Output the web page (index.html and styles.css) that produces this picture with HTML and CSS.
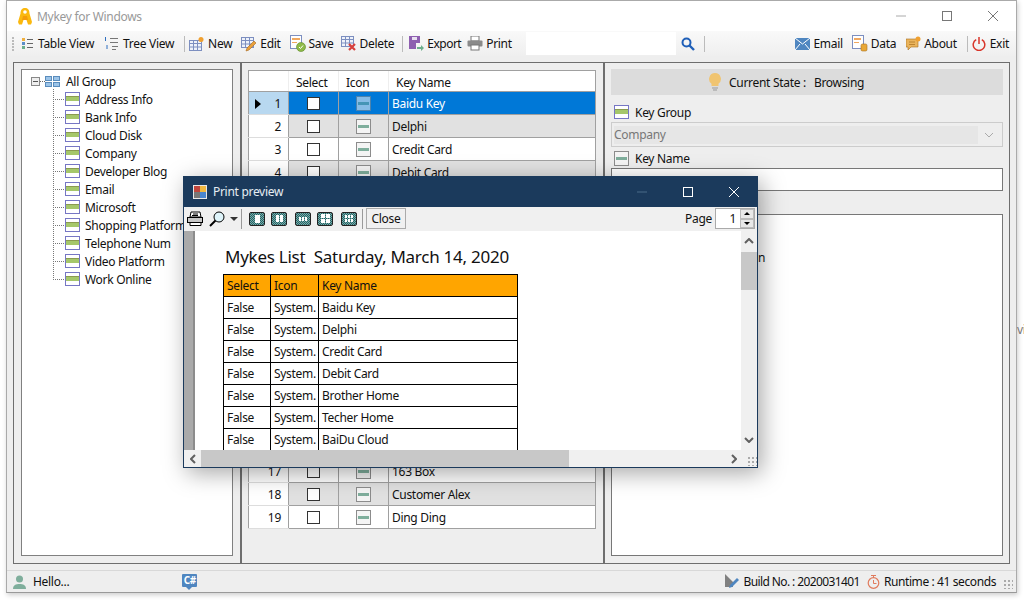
FILE: index.html
```html
<!DOCTYPE html>
<html>
<head>
  <meta charset="utf-8">
  <title>Mykey for Windows</title>
  <link rel="stylesheet" href="styles.css">
</head>
<body>
  <svg class="defs" width="0" height="0">
    <symbol id="i-group" viewBox="0 0 15 14">
      <rect x=".5" y=".5" width="14" height="13" fill="#fff" stroke="#7676c4"/>
      <rect x="1" y="4" width="13" height="5" fill="#a5c76a"/>
      <rect x="1" y="4" width="13" height="1" fill="#8a9a50"/>
    </symbol>
    <symbol id="i-key" viewBox="0 0 15 15">
      <rect x=".5" y=".5" width="14" height="14" fill="#f4f4f4" stroke="#8c8c8c"/>
      <rect x="2" y="6" width="11" height="3" fill="#7fae9c"/>
    </symbol>
    <symbol id="i-table" viewBox="0 0 16 14">
      <rect x=".5" y="3.5" width="12" height="10" fill="#eef2fa" stroke="#7d8fc0"/>
      <path d="M.5 6.5h12M.5 10h12M4.5 3.5v10M8.5 3.5v10" stroke="#7d8fc0" fill="none"/>
    </symbol>
  </svg>

  <div class="window">
    <div class="titlebar">
      <svg class="app-icon" width="16" height="17" viewBox="0 0 16 17">
        <path d="M8 0C4.500 0 3.500 2.500 3.500 5.500L1 14l1 2.500h3L6.500 12h3L11 16.500h3l1-2.500-2.500-8.500C12.500 2.500 11.500 0 8 0z" fill="#fbb80e"/>
        <circle cx="8" cy="4" r="1.800" fill="#fff"/>
        <path d="M6 8h4l1 4H5z" fill="#f39c0a"/>
      </svg>
      <span class="app-title">Mykey for Windows</span>
      <div class="caption-btns">
        <svg width="12" height="12" viewBox="0 0 12 12"><path d="M1 6h10" stroke="#aaa"/></svg>
        <svg width="12" height="12" viewBox="0 0 12 12"><rect x="1.5" y="1.5" width="9" height="9" fill="none" stroke="#777"/></svg>
        <svg width="12" height="12" viewBox="0 0 12 12"><path d="M1 1l10 10M11 1L1 11" stroke="#777"/></svg>
      </div>
    </div>

    <div class="toolbar">
      <span class="grip"></span>
      <span class="tool tool-wide tool-table">
        <svg width="12" height="12" viewBox="0 0 12 12">
          <rect y="0" width="3" height="3" fill="#f0b040"/><rect y="4" width="3" height="3" fill="#5b8fc9"/><rect y="8" width="3" height="3" fill="#6cae8c"/>
          <path d="M5 1.5h6M5 5.5h6M5 9.500h6" stroke="#666"/>
        </svg>Table View</span>
      <span class="tool tool-wide tool-tree">
        <svg width="15" height="15" viewBox="0 0 15 15">
          <path d="M6 2.500h8M6 6.500h8M8 10.500h6M8 13.500h4" stroke="#777"/>
          <path d="M1.500 1v4M3 9v4" stroke="#2f6fc0"/>
        </svg>Tree View</span>
      <span class="sep"></span>
      <span class="tool">
        <svg width="16" height="15" viewBox="0 0 16 15">
          <use href="#i-table" width="16" height="14" y="1"/>
          <circle cx="12" cy="3.500" r="2.500" fill="#f0a030"/>
        </svg>New</span>
      <span class="tool">
        <svg width="16" height="16" viewBox="0 0 16 16">
          <use href="#i-table" width="16" height="14" y="-2"/>
          <path d="M5 15l1-3 7-7 2 2-7 7z" fill="#e8a03c" stroke="#a86a20" stroke-width=".6"/>
        </svg>Edit</span>
      <span class="tool tool-save">
        <svg width="16" height="17" viewBox="0 0 16 17">
          <rect x=".5" y=".5" width="11" height="13" fill="#fff" stroke="#7d8fc0"/>
          <rect x="2" y="3" width="8" height="2" fill="#f0a860"/><path d="M2 7.500h5" stroke="#f0a860"/>
          <circle cx="11" cy="12" r="4.500" fill="#8fba48" stroke="#5d8a2c" stroke-width=".6"/>
          <path d="M9 12l1.500 1.500 2.500-3" stroke="#fff" fill="none"/>
        </svg>Save</span>
      <span class="tool tool-delete">
        <svg width="16" height="16" viewBox="0 0 16 16">
          <use href="#i-table" width="16" height="14" y="-3"/>
          <path d="M8 8l6 6M14 8l-6 6" stroke="#d8403c" stroke-width="2.200"/>
        </svg>Delete</span>
      <span class="sep sep-export"></span>
      <span class="tool tool-export">
        <svg width="15" height="15" viewBox="0 0 15 15">
          <path d="M0 0h11v7H7v6H0z" fill="#8e5fb0"/><rect x="3" y="1" width="5" height="3" fill="#e8e0f0"/>
          <path d="M8 11h4V9l3 3-3 3v-2H8z" fill="#6cae8c"/>
        </svg>Export</span>
      <span class="tool">
        <svg width="16" height="15" viewBox="0 0 16 15">
          <rect x="4" y="0" width="8" height="5" fill="#fff" stroke="#777"/>
          <rect x=".5" y="4.500" width="15" height="6" rx="1" fill="#8a8a8a"/>
          <rect x="4" y="9" width="8" height="5" fill="#fff" stroke="#777"/>
        </svg>Print</span>
      <span class="search-box"></span>
      <svg class="search-icon" width="14" height="14" viewBox="0 0 14 14">
        <circle cx="5.500" cy="5.500" r="4" fill="none" stroke="#1f5fb8" stroke-width="2"/>
        <path d="M8.500 8.500l4.500 4.500" stroke="#1f5fb8" stroke-width="2.400"/>
      </svg>
      <span class="sep sep-search"></span>
      <span class="toolbar-spacer"></span>
      <span class="tool tool-wide tool-email">
        <svg width="15" height="12" viewBox="0 0 15 12">
          <rect width="15" height="12" fill="#4f86c0"/>
          <path d="M0 0l7.500 6L15 0M0 12l5-6M15 12l-5-6" stroke="#fff" fill="none"/>
        </svg>Email</span>
      <span class="tool tool-data">
        <svg width="16" height="17" viewBox="0 0 16 17">
          <rect x=".5" y=".5" width="11" height="13" fill="#fff" stroke="#7d8fc0"/>
          <rect x="2" y="3" width="7" height="2" fill="#f0a860"/><path d="M2 7.500h5" stroke="#f0a860"/>
          <rect x="9" y="9" width="6" height="7" rx="1.500" fill="#e8a838" stroke="#a87020" stroke-width=".6"/>
        </svg>Data</span>
      <span class="tool tool-about">
        <svg width="15" height="15" viewBox="0 0 15 15">
          <path d="M0 3h12v8H5l-3 3v-3H0z" fill="#eab45c" stroke="#a87020" stroke-width=".6"/>
          <circle cx="12" cy="3" r="2.500" fill="#f0a030"/>
          <path d="M3 6h6M3 8.500h6" stroke="#a87020" stroke-width=".7"/>
        </svg>About</span>
      <span class="sep"></span>
      <span class="tool tool-wide tool-exit">
        <svg width="14" height="14" viewBox="0 0 14 14">
          <path d="M4.200 2.600a5.800 5.800 0 1 0 5.600 0" fill="none" stroke="#d8352a" stroke-width="1.500"/>
          <path d="M7 0v7" stroke="#d8352a" stroke-width="1.500"/>
        </svg>Exit</span>
    </div>

    <div class="main">
      <div class="panel panel-tree">
        <div class="tree-box">
          <div class="tree-root">
            <span class="expander"></span>
            <span class="twig-short"></span>
            <svg width="15" height="11" viewBox="0 0 15 11">
              <rect x=".5" y=".5" width="6" height="4" fill="#9cc4e8" stroke="#5a8cbc"/><rect x="8.500" y=".5" width="6" height="4" fill="#9cc4e8" stroke="#5a8cbc"/>
              <rect x=".5" y="6.500" width="6" height="4" fill="#9cc4e8" stroke="#5a8cbc"/><rect x="8.500" y="6.500" width="6" height="4" fill="#9cc4e8" stroke="#5a8cbc"/>
            </svg>
            <span>All Group</span>
          </div>
          <ul class="tree-list">
            <li><svg width="15" height="14"><use href="#i-group"/></svg>Address Info</li>
            <li><svg width="15" height="14"><use href="#i-group"/></svg>Bank Info</li>
            <li><svg width="15" height="14"><use href="#i-group"/></svg>Cloud Disk</li>
            <li><svg width="15" height="14"><use href="#i-group"/></svg>Company</li>
            <li><svg width="15" height="14"><use href="#i-group"/></svg>Developer Blog</li>
            <li><svg width="15" height="14"><use href="#i-group"/></svg>Email</li>
            <li><svg width="15" height="14"><use href="#i-group"/></svg>Microsoft</li>
            <li><svg width="15" height="14"><use href="#i-group"/></svg>Shopping Platform</li>
            <li><svg width="15" height="14"><use href="#i-group"/></svg>Telephone Num</li>
            <li><svg width="15" height="14"><use href="#i-group"/></svg>Video Platform</li>
            <li><svg width="15" height="14"><use href="#i-group"/></svg>Work Online</li>
          </ul>
        </div>
      </div>

      <div class="panel panel-grid">
        <table class="grid">
          <thead>
            <tr><th class="col-row"></th><th class="col-select">Select</th><th class="col-icon">Icon</th><th class="col-name">Key Name</th></tr>
          </thead>
          <tbody>
            <tr class="selected"><td class="row-no"><span class="row-arrow"></span>1</td><td><span class="check"></span></td><td><svg width="15" height="15"><use href="#i-key"/></svg></td><td class="name">Baidu Key</td></tr>
            <tr class="alt"><td class="row-no">2</td><td><span class="check"></span></td><td><svg width="15" height="15"><use href="#i-key"/></svg></td><td class="name">Delphi</td></tr>
            <tr><td class="row-no">3</td><td><span class="check"></span></td><td><svg width="15" height="15"><use href="#i-key"/></svg></td><td class="name">Credit Card</td></tr>
            <tr class="alt"><td class="row-no">4</td><td><span class="check"></span></td><td><svg width="15" height="15"><use href="#i-key"/></svg></td><td class="name">Debit Card</td></tr>
            <tr class="covered"><td colspan="4"></td></tr>
            <tr><td class="row-no">17</td><td><span class="check"></span></td><td><svg width="15" height="15"><use href="#i-key"/></svg></td><td class="name">163 Box</td></tr>
            <tr class="alt"><td class="row-no">18</td><td><span class="check"></span></td><td><svg width="15" height="15"><use href="#i-key"/></svg></td><td class="name">Customer Alex</td></tr>
            <tr><td class="row-no">19</td><td><span class="check"></span></td><td><svg width="15" height="15"><use href="#i-key"/></svg></td><td class="name">Ding Ding</td></tr>
          </tbody>
        </table>
      </div>

      <div class="panel panel-detail">
        <div class="state-bar">
          <svg width="12" height="19" viewBox="0 0 12 19">
            <path d="M6 0a6 6 0 0 0-3.500 10.800V13h7v-2.200A6 6 0 0 0 6 0z" fill="#f0c470"/>
            <path d="M3 15h6M4 17h4" stroke="#999"/>
          </svg>
          <span>Current State :</span>
          <span>Browsing</span>
        </div>
        <div class="field-label field-group"><svg width="15" height="14"><use href="#i-group"/></svg>Key Group</div>
        <div class="combo">
          <span class="combo-value">Company</span>
          <svg width="10" height="6" viewBox="0 0 10 6"><path d="M1 1l4 4 4-4" fill="none" stroke="#aaa"/></svg>
        </div>
        <div class="field-label"><svg width="15" height="15"><use href="#i-key"/></svg>Key Name</div>
        <div class="text-input"></div>
        <div class="notes"><span>n</span></div>
      </div>
    </div>

    <div class="statusbar">
      <svg width="13" height="14" viewBox="0 0 13 14">
        <circle cx="6.500" cy="4" r="3.500" fill="#7fae9c"/><path d="M0 14c0-4 3-5 6.500-5s6.500 1 6.500 5z" fill="#7fae9c"/>
      </svg>
      <span class="status-hello">Hello...</span>
      <span class="badge-cs">C#</span>
      <span class="status-spacer"></span>
      <svg width="16" height="15" viewBox="0 0 16 15">
        <path d="M1 0l8 8v5H1z" fill="#808080"/>
        <path d="M5 14l1-3 7-7 2 2-7 7z" fill="#4f86c0"/>
      </svg>
      <span class="status-build">Build No. : 2020031401</span>
      <svg width="13" height="14" viewBox="0 0 13 14">
        <circle cx="6.500" cy="8" r="5.300" fill="none" stroke="#e07a5c" stroke-width="1.200"/>
        <path d="M4 .5h5M6.500 1v2M6.500 5v3.500H9.500" stroke="#e07a5c" fill="none"/>
      </svg>
      <span class="status-runtime">Runtime : 41 seconds</span>
      <span class="size-grip"></span>
    </div>
  </div>

  <span class="edge-text">vi</span>

  <!-- print preview dialog sits over the main window -->
  <div class="dialog">
    <div class="dlg-title">
      <svg width="14" height="14" viewBox="0 0 14 14">
        <rect width="14" height="14" fill="#e8e8e8"/>
        <rect x="1" y="1" width="6" height="6" fill="#c0453c"/><rect x="7" y="1" width="6" height="6" fill="#f0b840"/>
        <rect x="1" y="7" width="6" height="6" fill="#777"/><rect x="7" y="7" width="6" height="6" fill="#4a86d0"/>
      </svg>
      <span class="dlg-title-text">Print preview</span>
      <div class="dlg-caption">
        <svg width="12" height="12" viewBox="0 0 12 12"><path d="M1 6h10" stroke="#4a6a88"/></svg>
        <svg width="12" height="12" viewBox="0 0 12 12"><rect x="1.500" y="1.500" width="9" height="9" fill="none" stroke="#fff"/></svg>
        <svg width="12" height="12" viewBox="0 0 12 12"><path d="M1 1l10 10M11 1L1 11" stroke="#fff"/></svg>
      </div>
    </div>
    <div class="dlg-toolbar">
      <svg class="dlg-print" width="16" height="15" viewBox="0 0 16 15">
        <path d="M4 1h9l1 5H3z" fill="#fff" stroke="#000"/>
        <rect x=".5" y="6.500" width="15" height="5" fill="#c8c8c8" stroke="#000"/>
        <path d="M3 11.500h11v3H3z" fill="#fff" stroke="#000"/>
        <path d="M6 3h5M5 4.500h6" stroke="#000"/>
      </svg>
      <svg class="dlg-zoom" width="16" height="16" viewBox="0 0 16 16">
        <circle cx="10" cy="6" r="5" fill="#dff4fa" stroke="#000"/>
        <path d="M6.500 9.500L1 15" stroke="#000" stroke-width="2"/>
      </svg>
      <span class="caret"></span>
      <span class="dlg-sep"></span>
      <span class="page-btn page-one"><i></i></span>
      <span class="page-btn page-two"><i></i><i></i></span>
      <span class="page-btn page-three"><i></i><i></i><i></i></span>
      <span class="page-btn page-four"><i></i><i></i><i></i><i></i></span>
      <span class="page-btn page-six"><i></i><i></i><i></i><i></i><i></i><i></i></span>
      <span class="dlg-sep"></span>
      <span class="close-btn">Close</span>
      <span class="dlg-spacer"></span>
      <span class="page-label">Page</span>
      <span class="spinner">
        <span class="spinner-value">1</span>
        <span class="spinner-btns"><b class="spin-up"></b><b class="spin-down"></b></span>
      </span>
    </div>
    <div class="dlg-body">
      <div class="preview">
        <div class="preview-strip"></div>
        <div class="preview-page">
          <div class="preview-title">Mykes List&nbsp; Saturday, March 14, 2020</div>
          <table class="print-table">
            <tr class="print-head"><td class="p-select">Select</td><td class="p-icon">Icon</td><td>Key Name</td></tr>
            <tr><td>False</td><td>System.</td><td>Baidu Key</td></tr>
            <tr><td>False</td><td>System.</td><td>Delphi</td></tr>
            <tr><td>False</td><td>System.</td><td>Credit Card</td></tr>
            <tr><td>False</td><td>System.</td><td>Debit Card</td></tr>
            <tr><td>False</td><td>System.</td><td>Brother Home</td></tr>
            <tr><td>False</td><td>System.</td><td>Techer Home</td></tr>
            <tr><td>False</td><td>System.</td><td>BaiDu Cloud</td></tr>
          </table>
        </div>
        <div class="vscroll">
          <svg width="10" height="6" viewBox="0 0 10 6"><path d="M1 5l4-4 4 4" fill="none" stroke="#606060" stroke-width="2"/></svg>
          <span class="vthumb"></span>
          <span class="scroll-fill"></span>
          <svg width="10" height="6" viewBox="0 0 10 6"><path d="M1 1l4 4 4-4" fill="none" stroke="#606060" stroke-width="2"/></svg>
        </div>
      </div>
      <div class="hscroll">
        <svg width="6" height="10" viewBox="0 0 6 10"><path d="M5 1L1 5l4 4" fill="none" stroke="#606060" stroke-width="2"/></svg>
        <span class="hthumb"></span>
        <span class="scroll-fill"></span>
        <svg width="6" height="10" viewBox="0 0 6 10"><path d="M1 1l4 4-4 4" fill="none" stroke="#606060" stroke-width="2"/></svg>
        <span class="size-grip dlg-grip"></span>
      </div>
    </div>
  </div>
</body>
</html>
```

FILE: styles.css
```css
* {
  box-sizing: border-box;
}
html, body {
  margin: 0;
  height: 100%;
}
body {
  position: relative;
  width: 1024px;
  height: 600px;
  overflow: hidden;
  background: #fff;
  font-family: "Noto Sans", sans-serif;
  font-size: 12px;
  letter-spacing: -.3px;
  color: #111;
}
svg {
  display: block;
  flex: none;
}
.defs {
  position: absolute;
}

/* main window */
.window {
  display: flex;
  flex-direction: column;
  width: 1011px;
  height: 593px;
  margin-left: 6px;
  background: #eee;
  border: 1px solid #aaa;
  border-bottom-color: #999;
  box-shadow: 1px 2px 5px rgba(0, 0, 0, 0.2);
}
.titlebar {
  display: flex;
  align-items: center;
  height: 30px;
  padding-left: 10px;
  background: #fff;
}
.app-title {
  margin-left: 4px;
  color: #999;
}
.caption-btns {
  display: flex;
  gap: 34px;
  margin-left: auto;
  padding-right: 17px;
}
.toolbar {
  display: flex;
  align-items: center;
  height: 25px;
  padding-left: 5px;
  background: linear-gradient(#f9f9f9, #efefef);
}
.grip {
  width: 2px;
  height: 14px;
  margin-right: 8px;
  background: repeating-linear-gradient(#bbb 0 2px, transparent 2px 3px);
}
.tool {
  display: flex;
  align-items: center;
  gap: 3px;
  margin-right: 9px;
  white-space: nowrap;
}
.tool-wide {
  gap: 4px;
}
.tool-table {
  margin-right: 10px;
}
.tool-tree {
  margin-right: 10px;
}
.tool-save {
  margin-right: 7px;
}
.tool-delete {
  margin-right: 8px;
}
.tool-export {
  margin-right: 6px;
  letter-spacing: -.5px;
}
.tool-email {
  margin-right: 9px;
}
.tool-data {
  margin-right: 10px;
}
.tool-about {
  margin-right: 10px;
}
.sep {
  width: 1px;
  height: 16px;
  margin-right: 4px;
  background: #bbb;
}
.sep-export {
  margin-right: 6px;
}
.search-box {
  width: 150px;
  height: 23px;
  margin-left: 5px;
  background: #fff;
}
.search-icon {
  margin-left: 5px;
}
.sep-search {
  margin-left: 9px;
}
.toolbar-spacer {
  flex: 1;
}
.tool-exit {
  margin-right: 7px;
}

/* three panels */
.main {
  display: flex;
  flex: none;
  height: 502px;
  margin: 6px 6px 0;
  border: 1px solid #6e6e6e;
}
.panel-tree {
  width: 228px;
  padding: 6px 7px 7px;
  border-right: 2px solid #6e6e6e;
}
.tree-box {
  height: 100%;
  padding: 2px 0 0 9px;
  background: #fff;
  border: 1px solid #808080;
}
.tree-root {
  display: flex;
  align-items: center;
  height: 18px;
}
.expander {
  width: 9px;
  height: 9px;
  background: linear-gradient(#555, #555) center / 5px 1px no-repeat #eee;
  border: 1px solid #888;
}
.twig-short {
  width: 5px;
  border-top: 1px dotted #666;
}
.tree-root span:last-child {
  margin-left: 6px;
}
.tree-list {
  margin: -1px 0 0 22px;
  padding: 1px 0 0;
  list-style: none;
  background: repeating-linear-gradient(#777 0 1px, transparent 1px 2px) left top / 1px calc(100% - 9px) no-repeat;
}
.tree-list li {
  display: flex;
  align-items: center;
  gap: 5px;
  height: 18px;
  padding-left: 12px;
  white-space: nowrap;
  background: repeating-linear-gradient(90deg, #777 0 1px, transparent 1px 2px) left center / 12px 1px no-repeat;
}

.panel-grid {
  width: 363px;
  padding: 7px 6px 0 6px;
  border-right: 2px solid #6e6e6e;
}
.grid {
  width: 348px;
  table-layout: fixed;
  border-collapse: collapse;
  background: #fff;
}
.grid th {
  height: 21px;
  padding: 2px 0 0 7px;
  font-weight: normal;
  text-align: left;
  background: #fff;
  border-top: 1px solid #a0a0a0;
  border-bottom: 1px solid #a0a0a0;
  border-left: 1px solid #eee;
}
.grid th.col-row {
  width: 40px;
  border-left: 1px solid #a0a0a0;
}
.col-select,
.col-icon {
  width: 50px;
}
.grid th.col-name {
  border-right: 1px solid #a0a0a0;
}
.grid td {
  height: 23px;
  padding: 0;
  text-align: center;
  border: 1px solid #a0a0a0;
}
.grid td svg {
  margin: 0 auto;
}
.grid td.row-no {
  position: relative;
  padding-right: 7px;
  text-align: right;
  background: #fff;
  border-top-color: #ddd;
  border-bottom-color: #ddd;
  border-right-color: #a0a0a0;
}
.grid td.name {
  padding-left: 3px;
  text-align: left;
}
.grid .alt td:not(.row-no) {
  background: #e1e1e1;
}
.grid .selected td {
  color: #fff;
  background: #0078d7;
}
.grid .selected td.row-no {
  color: #111;
  background: #b8d8f0;
}
.grid .selected svg {
  opacity: .55;
}
.grid .covered td {
  height: 276px;
  background: #e1e1e1;
}
.row-arrow {
  position: absolute;
  top: 7px;
  left: 6px;
  border-top: 5px solid transparent;
  border-bottom: 5px solid transparent;
  border-left: 6px solid #000;
}
.check {
  display: block;
  width: 13px;
  height: 13px;
  margin: 0 auto;
  background: #fff;
  border: 1px solid #333;
}

.panel-detail {
  flex: 1;
  padding: 6px;
}
.state-bar {
  display: flex;
  align-items: center;
  gap: 8px;
  height: 26px;
  padding-left: 98px;
  background: #dcdcdc;
}
.field-label {
  display: flex;
  align-items: center;
  gap: 6px;
  height: 18px;
  padding-left: 3px;
}
.field-group {
  margin-top: 8px;
}
.combo {
  display: flex;
  align-items: center;
  height: 25px;
  margin: 1px 0 2px;
  padding: 2px 8px 2px 2px;
  background: #eee;
  border: 1px solid #ccc;
}
.combo-value {
  flex: 1;
  height: 18px;
  margin-right: 6px;
  line-height: 18px;
  color: #777;
  background: #e6e6e6;
}
.text-input {
  height: 23px;
  margin-top: 1px;
  background: #fff;
  border: 1px solid #777;
}
.notes {
  height: 342px;
  margin-top: 23px;
  padding: 34px 0 0 146px;
  background: #fff;
  border: 1px solid #777;
}

/* status bar */
.statusbar {
  display: flex;
  align-items: center;
  height: 22px;
  margin-top: 6px;
  padding-left: 6px;
  border-top: 1px solid #d8d8d8;
}
.status-hello {
  margin-left: 7px;
}
.badge-cs {
  position: relative;
  width: 15px;
  height: 13px;
  margin: -2px 0 0 113px;
  font-size: 10px;
  font-weight: bold;
  line-height: 13px;
  text-align: center;
  color: #fff;
  background: #4f86c0;
  border-radius: 1px;
}
.badge-cs::after {
  content: "";
  position: absolute;
  top: 13px;
  left: 4px;
  border-top: 3px solid #4f86c0;
  border-left: 3px solid transparent;
  border-right: 3px solid transparent;
}
.status-spacer {
  flex: 1;
}
.status-build {
  margin: 0 7px 0 3px;
  letter-spacing: -.6px;
}
.status-runtime {
  margin-left: 4px;
  letter-spacing: -.4px;
}
.size-grip {
  width: 10px;
  height: 10px;
  margin: 4px 3px 0 7px;
  background: radial-gradient(circle, #aaa 1px, transparent 1.200px) 0 0 / 4px 4px;
}
.edge-text {
  position: absolute;
  top: 321px;
  left: 1017px;
  color: #777;
}

/* print preview dialog */
.dialog {
  position: absolute;
  top: 176px;
  left: 183px;
  display: flex;
  flex-direction: column;
  width: 575px;
  height: 292px;
  background: #f0f0f0;
  border: 1px solid #1b3a5c;
  box-shadow: 4px 5px 22px rgba(0, 0, 0, 0.35);
}
.dlg-title {
  display: flex;
  align-items: center;
  height: 30px;
  padding: 0 0 1px 9px;
  color: #e6edf3;
  background: #1b3a5c;
}
.dlg-title-text {
  margin-left: 6px;
}
.dlg-caption {
  display: flex;
  gap: 34px;
  margin-left: auto;
  padding-right: 17px;
}
.dlg-toolbar {
  display: flex;
  align-items: center;
  height: 24px;
  padding: 0 0 1px 3px;
  background: #f0f0f0;
}
.dlg-zoom {
  margin-left: 6px;
}
.caret {
  margin-left: 5px;
  border-top: 4px solid #333;
  border-left: 4px solid transparent;
  border-right: 4px solid transparent;
}
.dlg-sep {
  width: 1px;
  height: 20px;
  margin: 0 3px;
  background: #999;
}
.page-btn {
  display: grid;
  gap: 1px;
  place-content: center;
  width: 16px;
  height: 14px;
  margin-left: 8px;
  background: repeating-conic-gradient(#1f6868 0 25%, #7fa6a6 0 50%) 0 0 / 2px 2px;
  border: 1px solid #222;
  border-radius: 2px;
}
.dlg-sep + .page-btn {
  margin-left: 4px;
}
.page-two,
.page-four {
  margin-left: 6px;
}
.page-six {
  margin-right: 2px;
}
.page-btn i {
  display: block;
  width: 3px;
  height: 4px;
  background: #fff;
}
.page-one i {
  width: 5px;
  height: 8px;
}
.page-two {
  grid-template-columns: repeat(2, 3px);
}
.page-two i {
  height: 7px;
}
.page-three {
  grid-template-columns: repeat(3, 2px);
}
.page-three i {
  width: 2px;
}
.page-four {
  grid-template-columns: repeat(2, 4px);
}
.page-four i {
  width: 4px;
}
.page-six {
  grid-template-columns: repeat(3, 2px);
}
.page-six i {
  width: 2px;
  height: 3px;
}
.close-btn {
  width: 40px;
  height: 21px;
  line-height: 19px;
  text-align: center;
  border: 1px solid #aaa;
}
.dlg-spacer {
  flex: 1;
}
.spinner {
  display: flex;
  width: 40px;
  height: 21px;
  margin: 0 2px 0 3px;
  background: #fff;
  border: 1px solid #aaa;
}
.spinner-value {
  flex: 1;
  padding-right: 4px;
  line-height: 19px;
  text-align: right;
}
.spinner-btns {
  display: flex;
  flex-direction: column;
  width: 14px;
}
.spinner-btns b {
  display: flex;
  flex: 1;
  align-items: center;
  justify-content: center;
  background: #e8e8e8;
  border: 1px solid #bbb;
}
.spin-up::after,
.spin-down::after {
  content: "";
  border-left: 3px solid transparent;
  border-right: 3px solid transparent;
}
.spin-up::after {
  border-bottom: 3px solid #000;
}
.spin-down::after {
  border-top: 3px solid #000;
}
.dlg-body {
  display: flex;
  flex: 1;
  flex-direction: column;
  min-height: 0;
}
.preview {
  display: flex;
  flex: 1;
  min-height: 0;
  overflow: hidden;
  background: #fff;
}
.preview-strip {
  flex: none;
  width: 11px;
  background: #aaa;
  border-right: 2px solid #8c8c8c;
}
.preview-page {
  flex: 1;
  padding: 12px 0 0 28px;
}
.preview-title {
  height: 31px;
  padding-left: 2px;
  font-size: 17px;
  line-height: 28px;
  letter-spacing: -.25px;
}
.print-table {
  width: 295px;
  table-layout: fixed;
  border-collapse: collapse;
}
.print-table td {
  height: 22px;
  padding: 0 0 0 3px;
  overflow: hidden;
  white-space: nowrap;
  border: 1px solid #000;
}
.p-select {
  width: 47px;
}
.p-icon {
  width: 48px;
}
.print-head td {
  background: #ffa500;
}
.vscroll {
  display: flex;
  flex: none;
  flex-direction: column;
  align-items: center;
  width: 16px;
  padding: 7px 0;
  background: #f0f0f0;
}
.vthumb {
  flex: none;
  width: 16px;
  height: 38px;
  margin-top: 8px;
  background: #c8c8c8;
}
.scroll-fill {
  flex: 1;
}
.hscroll {
  display: flex;
  flex: none;
  align-items: center;
  height: 17px;
  padding-left: 6px;
  background: #f0f0f0;
}
.hthumb {
  width: 368px;
  height: 17px;
  margin-left: 5px;
  background: #c8c8c8;
}
.dlg-grip {
  margin: 4px 0 0 10px;
}
```
